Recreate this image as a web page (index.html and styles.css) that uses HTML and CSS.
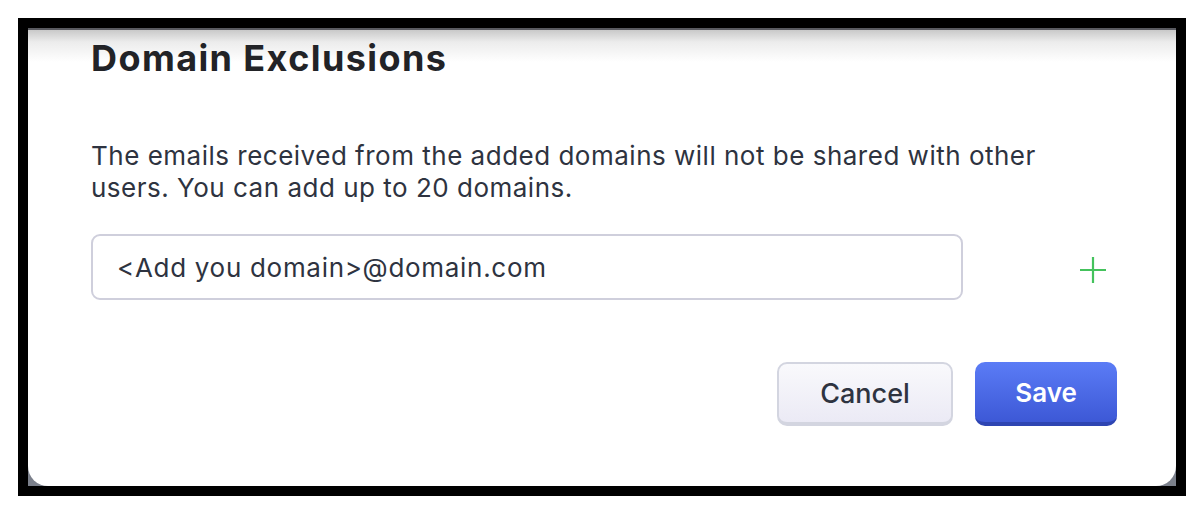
FILE: index.html
```html
<!DOCTYPE html>
<html>
<head>
<meta charset="utf-8">
<link rel="stylesheet" href="styles.css">
</head>
<body>
<div class="frame">
  <div class="backdrop">
    <div class="dialog">
      <h1 class="title">Domain Exclusions</h1>
      <p class="desc">The emails received from the added domains will not be shared with other users. You can add up to 20 domains.</p>
      <div class="row">
        <div class="field">&lt;Add you domain&gt;@domain.com</div>
        <span class="add">
          <svg width="28" height="28" viewBox="0 0 28 28"><path d="M14 1v26M1 14h26" stroke="#44c25c" stroke-width="2.2" fill="none"/></svg>
        </span>
      </div>
      <div class="actions">
        <button class="btn btn-cancel">Cancel</button>
        <button class="btn btn-save">Save</button>
      </div>
    </div>
  </div>
</div>
</body>
</html>
```
FILE: styles.css
```css
html, body { margin: 0; padding: 0; background: #fff; }
body { font-family: "Inter", "Noto Sans", sans-serif; }
.frame {
  margin: 18px 0 0 18px;
  width: 1168px;
  height: 478px;
  box-sizing: border-box;
  border: 10px solid #000;
}
.backdrop { background: #7b808b; height: 100%; }
.dialog {
  height: 100%;
  box-sizing: border-box;
  background: linear-gradient(#5a5b61 0, #5a5b61 2px, #c9c9c9 2px, #ececec 14px, #ffffff 34px, #ffffff 100%);
  border-radius: 0 0 20px 20px;
  padding: 0 59px 0 63px;
  display: flex;
  flex-direction: column;
}
.title {
  margin: 8px 0 0;
  font-size: 36px;
  line-height: 44px;
  font-weight: 700;
  color: #222327;
  letter-spacing: 1.4px;
}
.desc {
  margin: 60px 0 0;
  font-size: 26px;
  line-height: 32px;
  color: #2e3340;
  letter-spacing: 0.5px;
  max-width: 990px;
}
.row {
  display: flex;
  align-items: center;
  margin-top: 30px;
}
.field {
  width: 872px;
  height: 66px;
  box-sizing: border-box;
  border: 2px solid #cfcfdc;
  border-radius: 9px;
  padding-left: 24px;
  display: flex;
  align-items: center;
  font-size: 26px;
  letter-spacing: 0.7px;
  color: #2e3340;
}
.add { margin: 5px 0 0 116px; display: flex; }
.actions {
  display: flex;
  justify-content: flex-end;
  gap: 22px;
  margin-top: 62px;
}
.btn {
  height: 64px;
  box-sizing: border-box;
  border-radius: 10px;
  font-family: "Inter", sans-serif;
  font-size: 27px;
  font-weight: 500;
  padding: 0;
}
.btn-cancel {
  width: 176px;
  color: #2e3340;
  background: linear-gradient(#f9f9fc, #ebeaf5);
  border: 2px solid #d3d5e0;
  border-bottom-width: 4px;
}
.btn-save {
  width: 142px;
  color: #fff;
  font-weight: 600;
  font-size: 26px;
  background: linear-gradient(#5b7cf6, #3d58d6);
  border: none;
  border-bottom: 4px solid #2e45b2;
}
```
